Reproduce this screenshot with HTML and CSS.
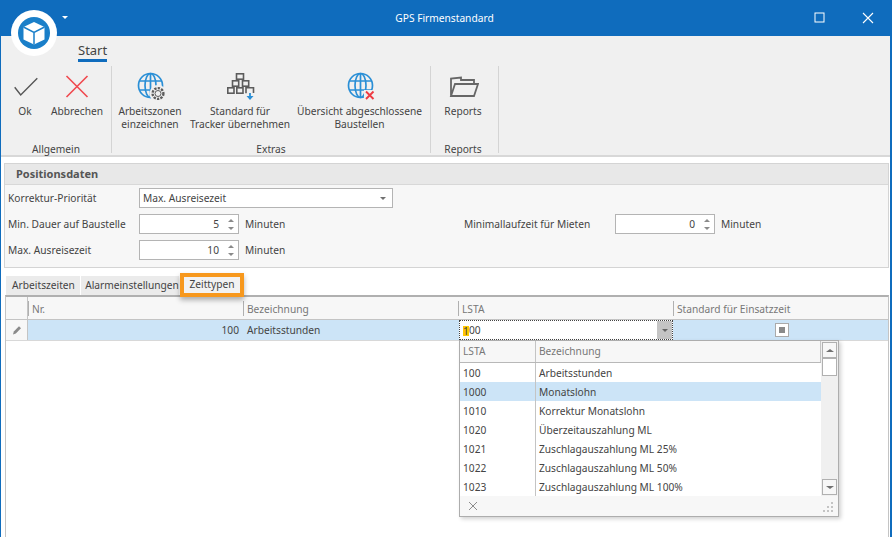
FILE: index.html
```html
<!DOCTYPE html>
<html lang="de">
<head>
<meta charset="utf-8">
<title>GPS Firmenstandard</title>
<link rel="stylesheet" href="styles.css">
</head>
<body>
<div class="window">
  <header class="titlebar">
    <span class="qat-arrow"></span>
    <span class="title">GPS Firmenstandard</span>
    <div class="winbtns">
      <svg width="12" height="12" viewBox="0 0 12 12"><rect x="1" y="1" width="9" height="9" fill="none" stroke="#fff" stroke-width="1"/></svg>
      <svg width="12" height="12" viewBox="0 0 12 12"><path d="M1 1L11 11M11 1L1 11" stroke="#fff" stroke-width="1.1"/></svg>
    </div>
  </header>
  <div class="logo">
    <svg width="46" height="46" viewBox="0 0 46 46"><circle cx="23" cy="23" r="16" fill="#1a7fc9"/><path d="M23 12L33.5 17V29.5L23 34.5L12.5 29.5V17Z" fill="#fff"/><path d="M12.5 17L23 22.5L33.5 17M23 22.5V34.5" fill="none" stroke="#1a7fc9" stroke-width="1.5"/></svg>
  </div>
  <nav class="ribbon-tabs"><span class="ribbon-tab">Start</span></nav>
  <section class="ribbon">
    <div class="rgroup g1">
      <div class="rbtns">
        <div class="rbtn b-ok"><svg class="ric" width="32" height="32" viewBox="0 0 32 32"><path d="M5.7 17.3L11.7 25L28.3 8.3" fill="none" stroke="#555" stroke-width="1.4"/></svg><span>Ok</span></div>
        <div class="rbtn b-ab"><svg class="ric" width="32" height="32" viewBox="0 0 32 32"><path d="M5.5 6L26.5 27M26.5 6L5.5 27" fill="none" stroke="#f0484e" stroke-width="1.6"/></svg><span>Abbrechen</span></div>
      </div>
      <div class="glabel">Allgemein</div>
    </div>
    <div class="rgroup g2">
      <div class="rbtns">
        <div class="rbtn b-az"><svg class="ric" width="32" height="32" viewBox="0 0 32 32"><g fill="none" stroke="#2a8fd6" stroke-width="1.7"><circle cx="16.5" cy="15.5" r="12"/><ellipse cx="16.5" cy="15.5" rx="5.5" ry="12"/><path d="M16.5 3.5V27.5M5 11H28M5 20H28"/></g><circle cx="24" cy="23.5" r="8.5" fill="#f0f0f0"/><circle cx="24" cy="23.5" r="5.4" fill="none" stroke="#5c5c5c" stroke-width="2.4" stroke-dasharray="2.3 1.2"/><circle cx="24" cy="23.5" r="3" fill="none" stroke="#5c5c5c" stroke-width="1"/></svg><span>Arbeitszonen<br>einzeichnen</span></div>
        <div class="rbtn b-st"><svg class="ric" width="32" height="32" viewBox="0 0 32 32"><g fill="none" stroke="#5c5c5c" stroke-width="1.6"><rect x="12.5" y="3.8" width="7" height="5.4"/><rect x="8.5" y="10.8" width="6.2" height="5.4"/><rect x="18.5" y="10.8" width="6.2" height="5.4"/><rect x="3.8" y="17.8" width="6.2" height="5.4"/><rect x="12.8" y="17.8" width="6.2" height="5.4"/><path d="M22 23.2V17.8H29.5V23"/></g><path d="M26 23V27" stroke="#2a8fd6" stroke-width="1.8"/><path d="M22.5 26H29.5L26 30Z" fill="#2a8fd6"/></svg><span>Standard für<br>Tracker übernehmen</span></div>
        <div class="rbtn b-ub"><svg class="ric" width="32" height="32" viewBox="0 0 32 32"><g fill="none" stroke="#2a8fd6" stroke-width="1.7"><circle cx="16.5" cy="15.5" r="12"/><ellipse cx="16.5" cy="15.5" rx="5.5" ry="12"/><path d="M16.5 3.5V27.5M5 11H28M5 20H28"/></g><rect x="20" y="20" width="12" height="11" fill="#f0f0f0"/><path d="M22 21.5L29.5 29M29.5 21.5L22 29" stroke="#ee3b42" stroke-width="1.9"/></svg><span>Übersicht abgeschlossene<br>Baustellen</span></div>
      </div>
      <div class="glabel">Extras</div>
    </div>
    <div class="rgroup g3">
      <div class="rbtns">
        <div class="rbtn b-re"><svg class="ric" width="32" height="32" viewBox="0 0 32 32"><path d="M4 26V8.5L14 7.5V10H27V14M4 26L8 14H31L27 26Z" fill="none" stroke="#666" stroke-width="1.8"/></svg><span>Reports</span></div>
      </div>
      <div class="glabel">Reports</div>
    </div>
  </section>
  <main class="content">
    <section class="panel">
      <h2 class="panel-head">Positionsdaten</h2>
      <div class="fields">
        <div class="row">
          <label class="lbl">Korrektur-Priorität</label>
          <div class="input combo"><span>Max. Ausreisezeit</span><i class="arrow"></i></div>
        </div>
        <div class="row">
          <label class="lbl">Min. Dauer auf Baustelle</label>
          <div class="input spin"><span class="val">5</span><span class="spinbtns"><b class="up"></b><b class="down"></b></span></div>
          <span class="unit">Minuten</span>
          <label class="lbl lbl2">Minimallaufzeit für Mieten</label>
          <div class="input spin"><span class="val">0</span><span class="spinbtns"><b class="up"></b><b class="down"></b></span></div>
          <span class="unit">Minuten</span>
        </div>
        <div class="row">
          <label class="lbl">Max. Ausreisezeit</label>
          <div class="input spin"><span class="val">10</span><span class="spinbtns"><b class="up"></b><b class="down"></b></span></div>
          <span class="unit">Minuten</span>
        </div>
      </div>
    </section>
    <div class="tabs">
      <span class="tab t1">Arbeitszeiten</span>
      <span class="tab t2">Alarmeinstellungen</span>
      <span class="tab t3">Zeittypen</span>
    </div>
    <section class="grid">
      <div class="grow ghead">
        <div class="gc c0"></div>
        <div class="gc c1">Nr.</div>
        <div class="gc c2">Bezeichnung</div>
        <div class="gc c3">LSTA</div>
        <div class="gc c4">Standard für Einsatzzeit</div>
      </div>
      <div class="grow gsel">
        <div class="gc c0"><svg width="12" height="12" viewBox="0 0 12 12"><path d="M2 10.5L2.8 7.5L8 2.2L10 4.2L4.8 9.5Z" fill="#8a8a8a"/></svg></div>
        <div class="gc c1 num">100</div>
        <div class="gc c2">Arbeitsstunden</div>
        <div class="gc c3 edit"><span><mark>1</mark>00</span><i class="dd"><i class="arrow dark"></i></i></div>
        <div class="gc c4 chk"><span class="check"><b></b></span></div>
      </div>
      <div class="popup">
        <div class="pmain">
          <div class="plist">
            <div class="prow phead"><div class="p1">LSTA</div><div class="p2">Bezeichnung</div></div>
            <div class="prow"><div class="p1">100</div><div class="p2">Arbeitsstunden</div></div>
            <div class="prow on"><div class="p1">1000</div><div class="p2">Monatslohn</div></div>
            <div class="prow"><div class="p1">1010</div><div class="p2">Korrektur Monatslohn</div></div>
            <div class="prow"><div class="p1">1020</div><div class="p2">Überzeitauszahlung ML</div></div>
            <div class="prow"><div class="p1">1021</div><div class="p2">Zuschlagauszahlung ML 25%</div></div>
            <div class="prow"><div class="p1">1022</div><div class="p2">Zuschlagauszahlung ML 50%</div></div>
            <div class="prow"><div class="p1">1023</div><div class="p2">Zuschlagauszahlung ML 100%</div></div>
          </div>
          <div class="pscroll">
            <span class="sb sb-up"></span>
            <span class="thumb"></span>
            <span class="fill"></span>
            <span class="sb sb-down"></span>
          </div>
        </div>
        <div class="pfoot">
          <svg width="10" height="10" viewBox="0 0 10 10"><path d="M1 1L9 9M9 1L1 9" stroke="#8c8c8c" stroke-width="1"/></svg>
          <svg width="11" height="11" viewBox="0 0 11 11"><path d="M8 1h2v2H8zM4 5h2v2H4zM8 5h2v2H8zM0 9h2v2H0zM4 9h2v2H4zM8 9h2v2H8z" fill="#c4c4c4"/></svg>
        </div>
      </div>
    </section>
  </main>
</div>
</body>
</html>
```

FILE: styles.css
```css
* { box-sizing: border-box; }
html, body { margin: 0; padding: 0; }
body { width: 892px; height: 537px; overflow: hidden; font-family: "Noto Sans", "DejaVu Sans", sans-serif; font-size: 10.2px; color: #444; }
.window { position: relative; width: 892px; height: 537px; display: flex; flex-direction: column; background: #fff; border-left: 1px solid #0f6cbd; border-right: 2px solid #0f6cbd; }
.titlebar { height: 36px; flex: none; background: #0f6cbd; color: #fff; display: flex; align-items: center; justify-content: center; position: relative; margin: 0 -2px 0 -1px; }
.title { font-size: 10.2px; margin-left: -3px; }
.qat-arrow { position: absolute; left: 62px; top: 16px; border: 3px solid transparent; border-top: 3px solid #fff; border-left-width: 3.5px; border-right-width: 3.5px; }
.winbtns { position: absolute; right: 18px; top: 12px; display: flex; gap: 36px; }
.logo { position: absolute; left: 10px; top: 10px; width: 46px; height: 46px; background: #fff; border-radius: 50%; display: flex; align-items: center; justify-content: center; z-index: 2; }
.ribbon-tabs { height: 30px; flex: none; background: #f0f0f0; padding: 7px 0 0 77px; }
.ribbon-tab { display: inline-block; height: 19px; font-size: 13px; line-height: 15px; color: #444; border-bottom: 3px solid #0f6cbd; }
.ribbon { height: 91px; flex: none; background: #f0f0f0; border-bottom: 2px solid #d8d8d8; display: flex; }
.rgroup { display: flex; flex-direction: column; height: 87px; border-right: 1px solid #d4d4d4; }
.g1 { width: 111px; }
.g2 { width: 319px; }
.g3 { width: 68px; padding-right: 3px; }
.rbtns { flex: 1; display: flex; min-height: 0; }
.rbtn { display: flex; flex-direction: column; align-items: center; text-align: center; line-height: 13px; white-space: nowrap; padding-top: 4px; }
.ric { margin-bottom: 3px; height: 32px; flex: none; }
.b-ok { width: 48px; }
.b-ab { width: 56px; }
.b-az { width: 76px; }
.b-st { width: 104px; }
.b-ub { width: 135px; }
.b-re { width: 64px; }
.glabel { height: 11px; text-align: center; line-height: 14px; }
.content { flex: 1; min-height: 0; display: flex; flex-direction: column; padding: 6px 1px 0 3px; }
.panel { height: 105px; flex: none; border: 1px solid #d4d4d4; background: #f7f7f7; }
.panel-head { margin: 0; height: 21px; background: #e8e8e8; font-size: 11px; line-height: 20px; font-weight: 700; color: #555; border-bottom: 1px solid #d8d8d8; padding-left: 11px; }
.fields { display: flex; flex-direction: column; gap: 6px; padding: 3px 0 0 3px; }
.row { display: flex; height: 20px; align-items: center; }
.lbl { width: 131px; flex: none; }
.lbl2 { width: 151px; margin-left: 179px; }
.input { height: 20px; background: #fff; border: 1px solid #b4b4b4; display: flex; align-items: center; color: #444; }
.combo { width: 254px; padding: 0 6px 0 3px; justify-content: space-between; }
.spin { width: 100px; justify-content: flex-end; }
.val { margin-right: 5px; }
.unit { margin-left: 6px; width: 40px; flex: none; }
.arrow { display: block; border: 3px solid transparent; border-top: 3px solid #707070; margin-top: 3px; border-left-width: 3.5px; border-right-width: 3.5px; }
.spinbtns { width: 14px; display: flex; flex-direction: column; align-items: center; gap: 5px; }
.spinbtns b { display: block; border: 3px solid transparent; border-left-width: 3.5px; border-right-width: 3.5px; }
.spinbtns .up { border-bottom: 3px solid #8a8a8a; border-top: 0; }
.spinbtns .down { border-top: 3px solid #8a8a8a; border-bottom: 0; }
.tabs { height: 20px; flex: none; display: flex; margin-top: 7px; padding-left: 2px; align-items: flex-end; }
.tab { display: block; height: 19px; line-height: 18px; background: #ebebeb; border-right: 1px solid #fff; text-align: center; }
.t1 { width: 75px; padding-left: 1px; }
.t2 { width: 99px; padding-left: 4px; }
.t3 { width: 56px; margin: 0 0 2px 4px; height: 16px; line-height: 15px; background: #f2f2f2; border: 0; outline: 4px solid #f7981d; box-shadow: 0 3px 5px 4px rgba(0,0,0,.3); position: relative; z-index: 1; }
.grid { flex: 1; min-height: 0; position: relative; margin: 0 0 0 1px; border-top: 2px solid #b0b0b0; border-left: 1px solid #c4c4c4; border-right: 1px solid #c4c4c4; }
.grow { display: flex; }
.ghead { height: 23px; background: #f7f7f7; border-bottom: 1px solid #c4c4c4; color: #777; line-height: 24px; }
.gsel { height: 21px; background: #cce4f7; border-bottom: 1px solid #d8d8d8; line-height: 21px; }
.gc { padding: 0 4px; flex: none; position: relative; }
.c0 { width: 22px; display: flex; align-items: center; justify-content: center; }
.gsel .c0 { background: #f7f7f7; border-right: 1px solid #c4c4c4; }
.c1, .c2, .c3, .c4 { width: 215px; }
.ghead .gc:not(.c0)::before { content: ""; position: absolute; left: 0; top: 4px; height: 15px; border-left: 1px solid #b0b0b0; }
.ghead .c0 { border-right: 1px solid #c4c4c4; }
.num { text-align: right; }
.edit { background: #fff; border: 1px dotted #444; padding: 0 0 0 3px; display: flex; justify-content: space-between; height: 20px; line-height: 18px; margin-left: 1px; width: 214px; }
.edit mark { display: inline-block; min-width: 6px; height: 10px; line-height: 10px; vertical-align: -1px; background: #ffc800; color: #444; }
.dd { width: 15px; background: #c4c4c4; display: flex; justify-content: center; align-items: center; }
.arrow.dark { border-top-color: #666; }
.chk { display: flex; justify-content: center; align-items: center; padding: 0 0 0 2px; }
.check { width: 14px; height: 14px; background: #fff; border: 1px solid #aaa; display: flex; align-items: center; justify-content: center; }
.check b { width: 6px; height: 6px; background: #8a8a8a; display: block; }
.popup { position: absolute; left: 453px; top: 43px; width: 380px; height: 177px; background: #fff; border: 1px solid #adadad; box-shadow: 2px 2px 4px rgba(0,0,0,.18); display: flex; flex-direction: column; z-index: 3; }
.pmain { height: 155px; flex: none; display: flex; }
.plist { flex: 1; }
.prow { display: flex; height: 19px; line-height: 20px; }
.phead { height: 22px; line-height: 21px; background: #f7f7f7; border-bottom: 1px solid #b8b8b8; color: #777; }
.on { background: #cce4f7; }
.p1 { width: 76px; height: 19px; padding-left: 3px; border-right: 1px solid #c4c4c4; }
.phead .p1 { height: 21px; }
.p2 { flex: 1; padding-left: 3px; }
.phead .p2 { border-right: 1px solid #c4c4c4; }
.pscroll { width: 17px; flex: none; background: #f0f0f0; display: flex; flex-direction: column; align-items: center; padding: 1px 0; }
.sb { width: 15px; height: 16px; background: #f7f7f7; border: 1px solid #b0b0b0; flex: none; display: flex; justify-content: center; align-items: center; }
.sb::after { content: ""; border: 3px solid transparent; border-left-width: 4px; border-right-width: 4px; }
.sb-up::after { border-bottom: 3px solid #707070; border-top: 0; }
.sb-down::after { border-top: 3px solid #707070; border-bottom: 0; }
.thumb { width: 15px; height: 18px; background: #fff; border: 1px solid #b0b0b0; flex: none; }
.fill { flex: 1; }
.pfoot { height: 20px; flex: none; background: #f7f7f7; display: flex; align-items: center; justify-content: space-between; padding: 0 4px 0 8px; }
```
